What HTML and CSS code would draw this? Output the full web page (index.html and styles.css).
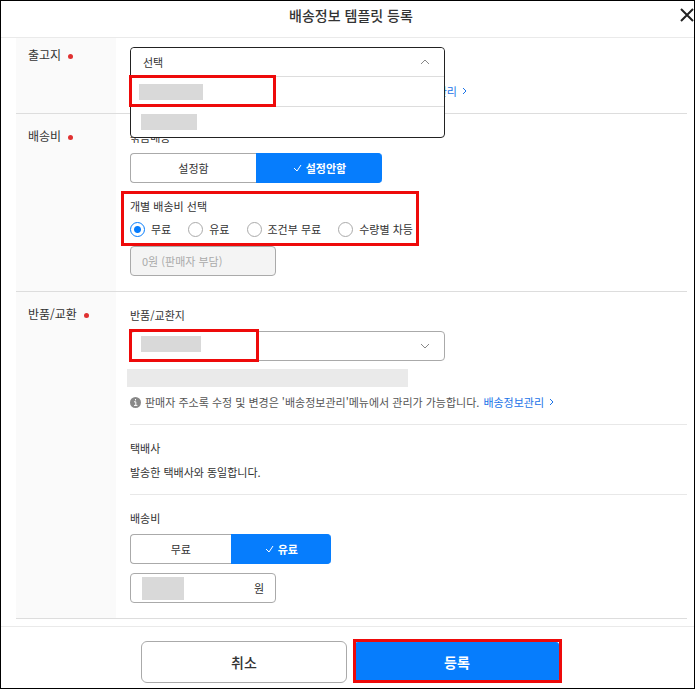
FILE: index.html
```
<!DOCTYPE html>
<html lang="ko">
<head>
  <meta charset="UTF-8" />
  <meta name="viewport" content="width=device-width, initial-scale=1.0" />
  <title>배송정보 템플릿 등록</title>
  <link rel="stylesheet" href="styles.css">
</head>
<body>
  <div class="modal">
    <header class="modal-header">
      <h1>배송정보 템플릿 등록</h1>
      <button type="button" class="close" aria-label="닫기">
        <svg width="14" height="14" viewBox="0 0 14 14"><path d="M1 1l12 12M13 1L1 13" /></svg>
      </button>
    </header>

    <form class="form" id="templateForm">
      <section class="row first">
        <h2>출고지 <i class="dot"></i></h2>
        <div class="content">
          <div class="dropdown">
            <div class="dropdown-panel">
              <button type="button" class="trigger" aria-expanded="true">
                선택
                <svg class="chevron" width="10" height="6" viewBox="0 0 10 6"><path d="M1 5l4-4 4 4" /></svg>
              </button>
              <button type="button" class="option highlighted" aria-label="출고지 1"><span class="masked"></span></button>
              <button type="button" class="option" aria-label="출고지 2"><span class="masked short"></span></button>
            </div>
          </div>
          <p class="note">
            <span class="info"></span>
            판매자 주소록은, '배송정보관리' 메뉴에서 가능합니다.
            <a href="#">배송정보관리 <svg width="5" height="8" viewBox="0 0 5 8"><path d="M1 1l3 3-3 3" /></svg></a>
          </p>
        </div>
      </section>

      <section class="row">
        <h2>배송비 <i class="dot"></i></h2>
        <div class="content">
          <h3>묶음배송</h3>
          <div class="toggle">
            <button type="button">설정함</button>
            <button type="button" class="on">
              <svg width="9" height="8" viewBox="0 0 9 8"><path d="M1 4l3 3 4-6" /></svg>설정안함
            </button>
          </div>
          <fieldset class="fee-type">
            <legend>개별 배송비 선택</legend>
            <div class="radios">
              <label><input type="radio" name="fee" checked />무료</label>
              <label><input type="radio" name="fee" />유료</label>
              <label><input type="radio" name="fee" />조건부 무료</label>
              <label><input type="radio" name="fee" />수량별 차등</label>
            </div>
          </fieldset>
          <input type="text" class="text-box" value="0원 (판매자 부담)" aria-label="배송비" disabled />
        </div>
      </section>

      <section class="row">
        <h2>반품/교환 <i class="dot"></i></h2>
        <div class="content">
          <h3><label for="returnPlace">반품/교환지</label></h3>
          <div class="select-box">
            <select id="returnPlace"><option></option></select>
            <svg class="chevron" width="10" height="6" viewBox="0 0 10 6"><path d="M1 1l4 4 4-4" /></svg>
            <span class="masked"></span>
          </div>
          <div class="masked-address"></div>
          <p class="note">
            <svg class="info" width="11" height="11" viewBox="0 0 11 11"><circle cx="5.5" cy="5.5" r="5.5" /><path d="M4 4.8h1.8v3.4M4 8.4h3.4M5.5 2v1.4" /></svg>
            판매자 주소록 수정 및 변경은 '배송정보관리'메뉴에서 관리가 가능합니다.
            <a href="#">배송정보관리 <svg width="5" height="8" viewBox="0 0 5 8"><path d="M1 1l3 3-3 3" /></svg></a>
          </p>

          <div class="block">
            <h3>택배사</h3>
            <p>발송한 택배사와 동일합니다.</p>
          </div>

          <div class="block">
            <h3>배송비</h3>
            <div class="toggle narrow">
              <button type="button">무료</button>
              <button type="button" class="on">
                <svg width="9" height="8" viewBox="0 0 9 8"><path d="M1 4l3 3 4-6" /></svg>유료
              </button>
            </div>
            <div class="price">
              <span class="masked"></span>
              <input type="text" id="returnFee" />
              <label for="returnFee">원</label>
            </div>
          </div>
        </div>
      </section>
    </form>

    <footer class="modal-footer">
      <button type="button" class="cancel">취소</button>
      <div class="submit-wrap">
        <button type="submit" form="templateForm" class="submit">등록</button>
      </div>
    </footer>
  </div>
</body>
</html>
```
FILE: styles.css
```
*,
*::after {
  box-sizing: border-box;
}

body {
  margin: 0;
  font-family: "Noto Sans CJK KR", "Noto Sans", sans-serif;
  font-size: 11px;
  line-height: 18px;
  color: #333;
  background: #fff;
}

h1, h2, h3, p {
  margin: 0;
  font-weight: 400;
}

button, input, select {
  font: inherit;
  color: inherit;
}

button {
  padding: 0;
  background: #fff;
  border: none;
  cursor: pointer;
}

svg {
  fill: none;
  stroke: currentColor;
  flex: none;
}

.modal {
  min-height: 100vh;
  border: 1px solid #000;
  overflow: hidden;
}

/* header */
.modal-header {
  display: flex;
  align-items: center;
  height: 37px;
  padding: 0 0 8px 21px;
  border-bottom: 1px solid #eaeaea;
}

.modal-header h1 {
  flex: 1;
  font-size: 14px;
  font-weight: 500;
  text-align: center;
}

.close {
  display: flex;
  color: #222;
}

.close svg {
  stroke-width: 2;
}

/* form rows */
.form {
  margin: 0 7px 7px 15px;
}

.row {
  display: grid;
  grid-template-columns: 100px 1fr;
  border-bottom: 1px solid #ddd;
}

.row h2 {
  padding: 13px 12px;
  font-size: 12px;
  background: #fafafa;
}

.row.first h2 {
  padding-top: 8px;
}

.dot {
  display: inline-block;
  width: 5px;
  height: 5px;
  margin-left: 4px;
  border-radius: 50%;
  background: #e03131;
  vertical-align: 1px;
}

.content {
  padding: 14px 0 15px 14px;
}

.row.first .content {
  padding: 9px 0 13px 14px;
}

.content h3 {
  margin-bottom: 7px;
  font-size: 11px;
}

.masked {
  display: block;
  width: 64px;
  height: 16px;
  background: #d9d9d9;
}

/* open dropdown */
.dropdown {
  position: relative;
  width: 315px;
  height: 30px;
  margin-bottom: 5px;
}

.dropdown-panel {
  position: absolute;
  top: 0;
  left: 0;
  right: 0;
  z-index: 1;
  padding-bottom: 1px;
  background: #fff;
  border: 1px solid #222;
  border-radius: 4px;
}

.dropdown-panel button {
  display: flex;
  align-items: center;
  width: 100%;
  height: 30px;
  border-radius: 4px;
}

.dropdown-panel .trigger {
  height: 28px;
  justify-content: space-between;
  padding: 0 14px 0 12px;
}

.dropdown-panel .option {
  padding: 0 10px;
  border-top: 1px solid #ddd;
  border-radius: 0 0 4px 4px;
}

.dropdown-panel .highlighted {
  position: relative;
  padding: 0 8px;
}

.masked.short {
  width: 56px;
}

.chevron {
  color: #888;
}

/* red guide boxes */
.highlighted::after,
.fee-type::after,
.select-box::after,
.submit-wrap::after {
  content: "";
  position: absolute;
  border: 3px solid #ee0a0a;
  pointer-events: none;
}

.highlighted::after {
  top: -2px;
  left: -2px;
  width: 147px;
  height: 32px;
}

.note {
  display: flex;
  align-items: center;
  gap: 4px;
  color: #555;
  white-space: nowrap;
}

.note a {
  display: flex;
  align-items: center;
  gap: 5px;
  color: #1a73e8;
  text-decoration: none;
}

.info {
  width: 11px;
  height: 11px;
}

.info circle {
  fill: #888;
  stroke: none;
}

.info path {
  stroke: #fff;
}

/* two-way toggle */
.toggle {
  display: flex;
  width: 252px;
  height: 30px;
}

.toggle.narrow {
  width: 201px;
}

.toggle button {
  flex: 1 1 0;
  display: flex;
  align-items: center;
  justify-content: center;
  gap: 4px;
  border: 1px solid #aaa;
  border-right: none;
  border-radius: 4px 0 0 4px;
}

.toggle .on {
  color: #fff;
  font-weight: 700;
  background: #067dfd;
  border-color: #067dfd;
  border-radius: 0 4px 4px 0;
}

/* fee type radios */
.fee-type {
  position: relative;
  margin: 14px 0 8px;
  padding: 0;
  border: none;
}

.fee-type::after {
  top: -6px;
  left: -9px;
  width: 298px;
  height: 55px;
}

.fee-type legend {
  float: left;
  width: 100%;
  padding: 0;
}

.radios {
  clear: both;
  display: flex;
  gap: 17px;
  padding-top: 5px;
}

.radios label {
  display: flex;
  align-items: center;
  gap: 6px;
  white-space: nowrap;
}

.radios input {
  appearance: none;
  width: 15px;
  height: 15px;
  margin: 0;
  border: 1px solid #aaa;
  border-radius: 50%;
}

.radios input:checked {
  border-color: #067dfd;
  background: radial-gradient(circle, #067dfd 3px, #fff 4px);
}

.text-box,
.price {
  display: flex;
  width: 146px;
  height: 30px;
  padding: 0 11px;
  border: 1px solid #aaa;
  border-radius: 4px;
}

.text-box:disabled {
  color: #aaa;
  background: #f4f4f4;
}

/* return / exchange */
.select-box {
  position: relative;
  width: 315px;
  height: 30px;
}

.select-box::after {
  top: -2px;
  left: -1px;
  width: 130px;
  height: 33px;
}

.select-box select {
  appearance: none;
  width: 100%;
  height: 100%;
  padding: 0 12px;
  background: #fff;
  border: 1px solid #aaa;
  border-radius: 4px;
}

.select-box .chevron {
  position: absolute;
  top: 12px;
  right: 15px;
}

.select-box .masked {
  position: absolute;
  top: 5px;
  left: 11px;
  width: 60px;
}

.masked-address {
  width: 281px;
  height: 18px;
  margin: 8px 0 6px -3px;
  background: #eaeaea;
}

.block {
  margin-top: 13px;
  padding-top: 14px;
  border-top: 1px solid #e8e8e8;
}

.block h3 {
  margin-bottom: 6px;
}

.block .toggle {
  margin-top: 7px;
}

.price {
  align-items: center;
  margin-top: 9px;
}

.price .masked {
  width: 42px;
  height: 23px;
}

.price input {
  flex: 1;
  min-width: 0;
  border: none;
  outline: none;
}

/* footer */
.modal-footer {
  display: flex;
  justify-content: center;
  gap: 7px;
  padding: 14px 0 5px 6px;
  border-top: 1px solid #eaeaea;
  font-size: 14px;
  font-weight: 500;
}

.modal-footer button {
  width: 206px;
  height: 42px;
  border: 1px solid #aaa;
  border-radius: 6px;
}

.submit-wrap {
  position: relative;
}

.modal-footer .submit {
  display: block;
  color: #fff;
  font-weight: 700;
  background: #067dfd;
  border-color: #067dfd;
}

.submit-wrap::after {
  top: -2px;
  left: -1px;
  right: -2px;
  bottom: 0;
}
```
